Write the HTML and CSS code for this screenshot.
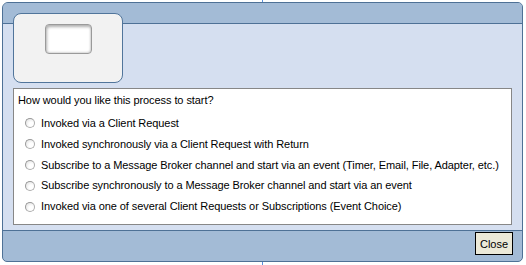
FILE: index.html
```html
<!DOCTYPE html>
<html>
<head>
<meta charset="utf-8">
<link rel="stylesheet" href="styles.css">
</head>
<body>
<div class="window">
  <div class="header"></div>
  <div class="main">
    <div class="card"><div class="slot"></div></div>
    <div class="panel">
      <div class="question">How would you like this process to start?</div>
      <ul class="options">
        <li><span class="radio"></span>Invoked via a Client Request</li>
        <li><span class="radio"></span>Invoked synchronously via a Client Request with Return</li>
        <li><span class="radio"></span>Subscribe to a Message Broker channel and start via an event (Timer, Email, File, Adapter, etc.)</li>
        <li><span class="radio"></span>Subscribe synchronously to a Message Broker channel and start via an event</li>
        <li><span class="radio"></span>Invoked via one of several Client Requests or Subscriptions (Event Choice)</li>
      </ul>
    </div>
  </div>
  <div class="footer"><button class="close">Close</button></div>
</div>
</body>
</html>
```
FILE: styles.css
```css
html, body {
  margin: 0;
  padding: 0;
}
body {
  width: 526px;
  height: 265px;
  background: linear-gradient(to right, #fff 262px, #5b8fdc 262px, #5b8fdc 263px, #fff 263px);
  font-family: "Liberation Sans", Arial, sans-serif;
  font-size: 11px;
  letter-spacing: -0.08px;
  color: #000;
  padding-top: 2px;
  box-sizing: border-box;
}
.window {
  margin-left: 2px;
  width: 521px;
  height: 260px;
  box-sizing: border-box;
  border: 1px solid #4e7196;
  border-radius: 6px 5px 5px 5px;
  background: #a3bbd6;
  display: flex;
  flex-direction: column;
  overflow: hidden;
}
.header {
  height: 20px;
  border-bottom: 1px solid #4e7196;
  background: #a3bbd6;
  flex: none;
}
.main {
  height: 206px;
  background: #d5dff0;
  border-bottom: 1px solid #4e7196;
  padding: 0 9px 0 10px;
  flex: none;
  display: flex;
  flex-direction: column;
}
.card {
  position: relative;
  margin-top: -11px;
  width: 110px;
  height: 70px;
  box-sizing: border-box;
  border: 1px solid #51759b;
  border-radius: 8px;
  background: #f2f2f2;
  display: flex;
  justify-content: center;
  padding-top: 10px;
}
.slot {
  width: 47px;
  height: 30px;
  box-sizing: border-box;
  border: 1px solid #9a9a9a;
  border-radius: 4px;
  background: #fff;
  box-shadow: inset 1px 2px 3px #b0b0b0, inset -1px -1px 2px #d8d8d8;
}
.panel {
  margin-top: 5px;
  width: 499px;
  height: 137px;
  box-sizing: border-box;
  border: 1px solid #878787;
  background: #fff;
  padding: 5px 0 0 4px;
}
.question {
  line-height: 13px;
}
.options {
  list-style: none;
  margin: 6px 0 0 0;
  padding: 0 0 0 7px;
}
.options li {
  height: 20.8px;
  line-height: 20.8px;
  display: flex;
  align-items: center;
  white-space: nowrap;
}
.radio {
  width: 10px;
  height: 10px;
  box-sizing: border-box;
  border: 1px solid #adadad;
  border-top-color: #999;
  border-left-color: #999;
  border-radius: 50%;
  background: radial-gradient(circle at 65% 65%, #fff 30%, #e0e0e0 90%);
  margin-right: 6px;
  flex: none;
}
.footer {
  flex: 1;
  display: flex;
  justify-content: flex-end;
  align-items: flex-start;
  padding: 1px 9px 0 0;
}
.close {
  width: 38px;
  height: 23px;
  border: 1px solid #000;
  border-radius: 0;
  background: #ece9d8;
  font-family: "Liberation Sans", Arial, sans-serif;
  font-size: 11px;
  color: #000;
  padding: 0;
}
```
